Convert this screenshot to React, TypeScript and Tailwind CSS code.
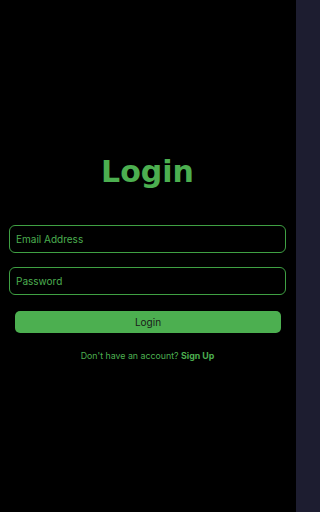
export default function App() {
  return (
    <div className="flex h-[512px] w-full bg-black font-['Inter',sans-serif]">
      <main className="flex w-[296px] shrink-0 flex-col pl-[9px] pr-[10px] pt-[157px]">
        <h1 className="text-center font-['DejaVu_Sans',sans-serif] text-[30px] font-bold leading-[30px] text-[#4caf50]">
          Login
        </h1>

        <form className="mt-[38px] flex flex-col" onSubmit={(e) => e.preventDefault()}>
          <input
            type="email"
            placeholder="Email Address"
            className="h-[28px] rounded-[6px] border border-[#3fa043] bg-transparent pl-[6px] text-[10px] text-[#4caf50] outline-none placeholder:text-[#4caf50]"
          />
          <input
            type="password"
            placeholder="Password"
            className="mt-[14px] h-[28px] rounded-[6px] border border-[#3fa043] bg-transparent pl-[6px] text-[10px] text-[#4caf50] outline-none placeholder:text-[#4caf50]"
          />
          <button
            type="submit"
            className="ml-[6px] mr-[5px] mt-[16px] h-[22px] rounded-[5px] bg-[#4caf50] text-[10px] text-[#1a1a1a]"
          >
            Login
          </button>
        </form>

        <p className="mt-[17px] text-center text-[8.8px] leading-[12px] text-[#4caf50]">
          Don't have an account? <span className="font-bold">Sign Up</span>
        </p>
      </main>
      <div className="flex-1 bg-[#1d1d30]" />
    </div>
  )
}
